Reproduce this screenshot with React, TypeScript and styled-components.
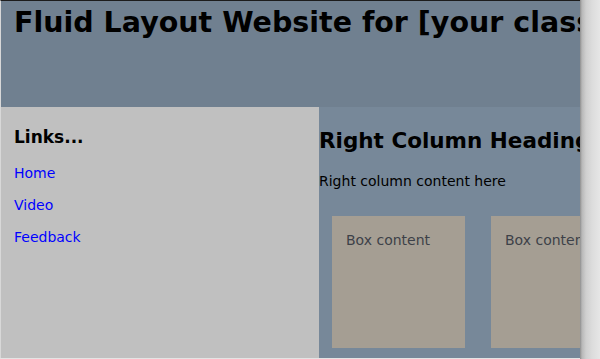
import React from "react";
import styled, { createGlobalStyle } from "styled-components";

const GlobalStyle = createGlobalStyle`
  html, body {
    margin: 0;
    padding: 0;
    background: #e6e6e6;
    overflow: hidden;
  }
  body {
    font-family: "DejaVu Sans", Verdana, sans-serif;
  }
`;

const Frame = styled.div`
  display: flex;
  width: 600px;
  height: 359px;
  overflow: hidden;
  background: #e4e4e4;
`;

const Page = styled.div`
  width: 579px;
  height: 357px;
  flex: none;
  display: flex;
  flex-direction: column;
  border-top: 1px solid #1c1c1c;
  border-left: 1px solid #d8d8d8;
  overflow: hidden;
`;

const Shadow = styled.div`
  flex: 1;
  background: linear-gradient(
    to right,
    #8e8e8e 0px,
    #b8b8b8 2px,
    #cfcfcf 6px,
    #dcdcdc 12px,
    #e6e6e6 20px
  );
`;

const Header = styled.header`
  height: 106px;
  flex: none;
  background: #708090;
  padding: 0 13px;
  white-space: nowrap;
  overflow: hidden;
`;

const Title = styled.h1`
  margin: 0;
  padding-top: 4px;
  font-size: 28.5px;
  line-height: 36px;
  font-weight: bold;
  color: #000;
`;

const Columns = styled.div`
  flex: 1;
  display: flex;
  min-height: 0;
`;

const LeftColumn = styled.nav`
  width: 318px;
  flex: none;
  background: #c0c0c0;
  padding: 18px 13px 0;
  box-sizing: border-box;
`;

const LinksHeading = styled.h3`
  margin: 0 0 8px;
  font-size: 17px;
  line-height: 24px;
  font-weight: bold;
  color: #000;
`;

const NavLink = styled.a`
  display: block;
  font-size: 14px;
  line-height: 32px;
  color: #0000ff;
  text-decoration: none;
`;

const RightColumn = styled.main`
  flex: 1;
  background: #778899;
  padding-top: 20px;
  overflow: hidden;
  white-space: nowrap;
`;

const RightHeading = styled.h2`
  margin: 0;
  font-size: 21.5px;
  line-height: 28px;
  font-weight: bold;
  color: #000;
`;

const RightText = styled.p`
  margin: 16px 0 0;
  font-size: 14px;
  line-height: 20px;
  color: #000;
`;

const BoxRow = styled.div`
  display: flex;
  gap: 26px;
  margin-top: 25px;
  padding-left: 13px;
`;

const Box = styled.div`
  width: 133px;
  height: 132px;
  flex: none;
  background: #a59e93;
  color: #3d4148;
  font-size: 14px;
  line-height: 20px;
  padding: 14px 14px;
  box-sizing: border-box;
`;

export default function App() {
  return (
    <>
      <GlobalStyle />
      <Frame>
        <Page>
          <Header>
            <Title>Fluid Layout Website for [your class name]</Title>
          </Header>
          <Columns>
            <LeftColumn>
              <LinksHeading>Links...</LinksHeading>
              <NavLink href="#">Home</NavLink>
              <NavLink href="#">Video</NavLink>
              <NavLink href="#">Feedback</NavLink>
            </LeftColumn>
            <RightColumn>
              <RightHeading>Right Column Heading</RightHeading>
              <RightText>Right column content here</RightText>
              <BoxRow>
                <Box>Box content</Box>
                <Box>Box content</Box>
              </BoxRow>
            </RightColumn>
          </Columns>
        </Page>
        <Shadow />
      </Frame>
    </>
  );
}
